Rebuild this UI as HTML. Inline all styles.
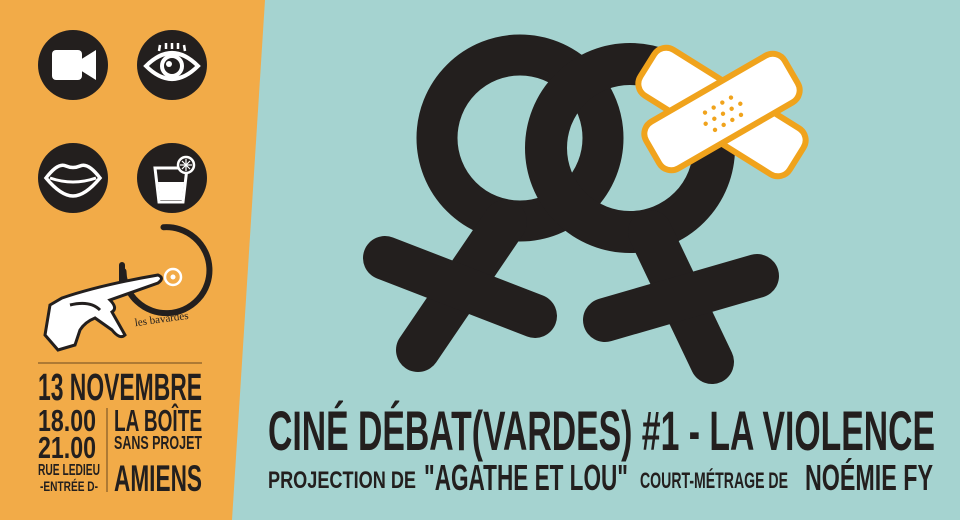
<!DOCTYPE html>
<html><head><meta charset="utf-8"><style>
html,body{margin:0;padding:0;width:960px;height:520px;overflow:hidden;background:#a5d3d0}
svg{display:block}
text{font-family:"Liberation Sans Narrow","Liberation Sans",sans-serif;font-weight:bold;fill:#231f1e}
</style></head><body>
<svg width="960" height="520" viewBox="0 0 960 520" xmlns="http://www.w3.org/2000/svg">
<rect width="960" height="520" fill="#a5d3d0"/>
<polygon points="0,0 265,0 232,520 0,520" fill="#f2ab48"/>

<!-- icons -->
<g fill="#231f1e">
<circle cx="73" cy="65" r="35"/><circle cx="172" cy="65" r="35"/>
<circle cx="73" cy="178" r="35"/><circle cx="172" cy="178" r="35"/>
</g>
<!-- camera -->
<rect x="52" y="50" width="30" height="30" rx="4" fill="#fff"/>
<polygon points="80,60 96,50 96,80 80,70" fill="#fff"/>
<!-- eye -->
<path d="M146 66 Q172 40 198 66 Q172 92 146 66Z" fill="none" stroke="#fff" stroke-width="4"/>
<circle cx="172" cy="66" r="10" fill="none" stroke="#fff" stroke-width="4"/>
<circle cx="169" cy="64" r="3" fill="#fff"/>
<g stroke="#fff" stroke-width="2.5"><line x1="160" y1="45" x2="159" y2="51"/><line x1="166" y1="43" x2="166" y2="49"/><line x1="172" y1="43" x2="172" y2="49"/><line x1="178" y1="43" x2="178" y2="49"/><line x1="184" y1="45" x2="185" y2="51"/></g>
<!-- lips -->
<path d="M46 178 Q58 162 66 166 Q73 169 80 166 Q88 162 100 178 Q85 196 73 196 Q61 196 46 178Z" fill="none" stroke="#fff" stroke-width="3.5"/>
<path d="M50 178 Q73 186 96 178" fill="none" stroke="#fff" stroke-width="3"/>
<!-- glass -->
<path d="M155 168 L187 168 L183 202 L159 202Z" fill="none" stroke="#fff" stroke-width="3"/>
<path d="M158 182 L184 182 L182 200 L160 200Z" fill="#fff"/>
<circle cx="186" cy="165" r="8" fill="#231f1e" stroke="#fff" stroke-width="2.5"/>
<g stroke="#fff" stroke-width="1.2"><line x1="180" y1="165" x2="192" y2="165"/><line x1="186" y1="159" x2="186" y2="171"/><line x1="182" y1="161" x2="190" y2="169"/><line x1="190" y1="161" x2="182" y2="169"/></g>

<!-- logo -->
<path d="M122 260 A43 43 0 1 0 172 228" fill="none" stroke="#231f1e" stroke-width="6" stroke-linecap="round" transform="rotate(-15 165 260)"/>
<path d="M122 265 L122 285" stroke="#231f1e" stroke-width="6" stroke-linecap="round"/>
<circle cx="173" cy="277" r="8" fill="none" stroke="#fff" stroke-width="2.5"/>
<circle cx="173" cy="277" r="2.5" fill="#fff"/>
<path d="M50 305 L62 298 Q100 285 158 275 Q165 278 158 283 L110 300 Q118 308 112 312 L125 335 Q120 340 112 330 L95 318 Q85 322 80 330 L75 345 L58 350 L45 335 Z" fill="#fff" stroke="#231f1e" stroke-width="3"/>
<path d="M70 305 Q90 300 100 310" fill="none" stroke="#231f1e" stroke-width="3"/>
<text x="134" y="322" font-family="Liberation Serif" font-weight="normal" font-size="11" transform="rotate(-8 165 315)" style="font-family:'Liberation Serif',serif;font-weight:normal">les bavardes</text>

<!-- info -->
<line x1="38" y1="363" x2="202" y2="363" stroke="#6b4a20" stroke-width="1"/>
<line x1="107" y1="408" x2="107" y2="492" stroke="#6b4a20" stroke-width="1"/>
<text x="38" y="400" font-size="38" textLength="164" lengthAdjust="spacingAndGlyphs">13 NOVEMBRE</text>
<text x="38" y="431" font-size="31" textLength="58" lengthAdjust="spacingAndGlyphs">18.00</text>
<text x="38" y="458" font-size="31" textLength="58" lengthAdjust="spacingAndGlyphs">21.00</text>
<text x="114" y="431" font-size="31" textLength="88" lengthAdjust="spacingAndGlyphs">LA BOÎTE</text>
<text x="114" y="449" font-size="18" textLength="88" lengthAdjust="spacingAndGlyphs">SANS PROJET</text>
<text x="38" y="475" font-size="16" textLength="62" lengthAdjust="spacingAndGlyphs">RUE LEDIEU</text>
<text x="40" y="491" font-size="14" textLength="58" lengthAdjust="spacingAndGlyphs">-ENTRÉE D-</text>
<text x="114" y="491" font-size="37" textLength="88" lengthAdjust="spacingAndGlyphs">AMIENS</text>

<!-- venus symbols -->
<g stroke="#231f1e" fill="none" stroke-linecap="round">
<circle cx="520" cy="138" r="83" stroke-width="41"/>
<line x1="505" y1="222" x2="418" y2="350" stroke-width="44"/>
<line x1="385" y1="258" x2="535" y2="316" stroke-width="44"/>
<circle cx="630" cy="148" r="84" stroke-width="42"/>
<line x1="650" y1="232" x2="712" y2="362" stroke-width="44"/>
<line x1="605" y1="320" x2="757" y2="276" stroke-width="44"/>
</g>
<!-- bandaid -->
<g transform="translate(722,112)">
<rect x="-88" y="-27" width="176" height="54" rx="14" fill="#fff" stroke="#f0a31c" stroke-width="6" transform="rotate(32)"/>
<rect x="-80" y="-27" width="160" height="54" rx="14" fill="#fff" stroke="#f0a31c" stroke-width="6" transform="rotate(-30)"/>
<g fill="#f0a31c" transform="rotate(-30)">
<circle cx="-15" cy="-8" r="2.2"/><circle cx="-5" cy="-8" r="2.2"/><circle cx="5" cy="-8" r="2.2"/><circle cx="15" cy="-8" r="2.2"/>
<circle cx="-20" cy="2" r="2.2"/><circle cx="-10" cy="2" r="2.2"/><circle cx="0" cy="2" r="2.2"/><circle cx="10" cy="2" r="2.2"/><circle cx="20" cy="2" r="2.2"/>
<circle cx="-15" cy="12" r="2.2"/><circle cx="-5" cy="12" r="2.2"/><circle cx="5" cy="12" r="2.2"/><circle cx="15" cy="12" r="2.2"/>
</g>
</g>

<!-- titles -->
<text x="268" y="450" font-size="56" textLength="667" lengthAdjust="spacingAndGlyphs">CINÉ DÉBAT(VARDES) #1 - LA VIOLENCE</text>
<text x="268" y="488" font-size="24" textLength="148" lengthAdjust="spacingAndGlyphs">PROJECTION DE</text>
<text x="424" y="490" font-size="36" textLength="204" lengthAdjust="spacingAndGlyphs">"AGATHE ET LOU"</text>
<text x="640" y="488" font-size="22" textLength="148" lengthAdjust="spacingAndGlyphs">COURT-MÉTRAGE DE</text>
<text x="805" y="490" font-size="36" textLength="128" lengthAdjust="spacingAndGlyphs">NOÉMIE FY</text>
</svg>
</body></html>
